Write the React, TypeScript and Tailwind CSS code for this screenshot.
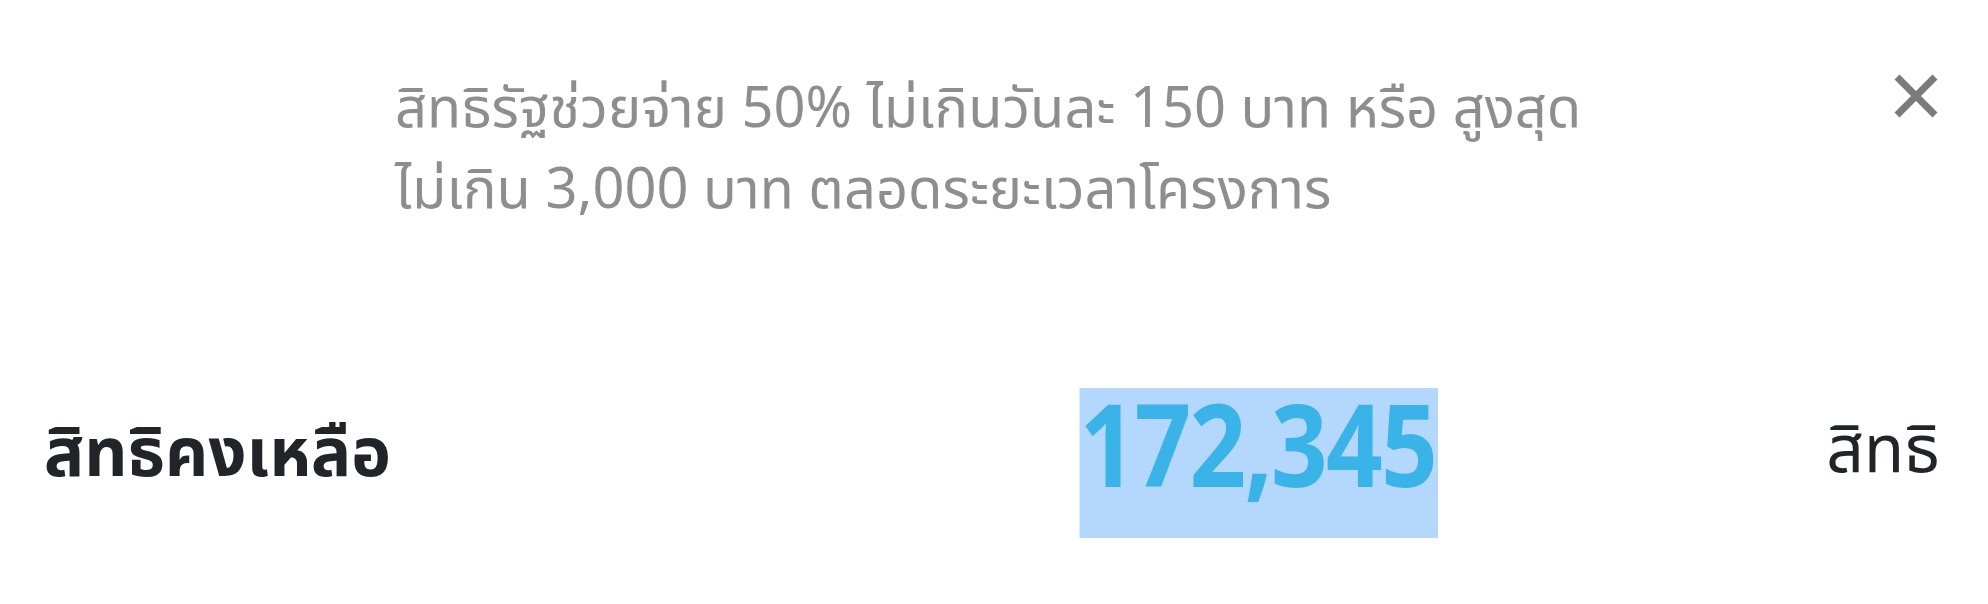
import React from "react";

const thai = { fontFamily: '"Noto Sans Thai", "Noto Sans", "Loma", "Garuda", sans-serif' };

export default function App() {
  return (
    <div className="w-[1988px] h-[604px] bg-white relative overflow-hidden" style={thai}>
      {/* conditions */}
      <div className="flex pt-[70px] pl-[395px] pr-[50px]">
        <p className="text-[56px] leading-[81px] text-[#8e8e8e] flex-1">
          สิทธิรัฐช่วยจ่าย 50% ไม่เกินวันละ 150 บาท หรือ สูงสุด
          <br />
          ไม่เกิน 3,000 บาท ตลอดระยะเวลาโครงการ
        </p>
        <button className="w-[44px] h-[44px] mt-[4px] flex items-center justify-center text-[#7a7a7a]" aria-label="close">
          <svg width="44" height="44" viewBox="0 0 44 44">
            <path d="M3 3 L41 41 M41 3 L3 41" stroke="currentColor" strokeWidth="7" strokeLinecap="butt" />
          </svg>
        </button>
      </div>

      {/* remaining rights */}
      <div className="flex items-center pl-[44px] pr-[48px] mt-[156px]">
        <span className="text-[67px] font-bold text-[#212529] leading-none mb-[16px]">สิทธิคงเหลือ</span>
        <span className="ml-auto mr-[388px] inline-block origin-right scale-x-[0.87] bg-[#b3d7fd] text-[#3ab4e8] text-[114px] font-bold leading-[128px] pb-[22px] tracking-[-2px] pr-[2px]">
          172,345
        </span>
        <span className="text-[66px] text-[#212529] leading-none mb-[22px]">สิทธิ</span>
      </div>
    </div>
  );
}
